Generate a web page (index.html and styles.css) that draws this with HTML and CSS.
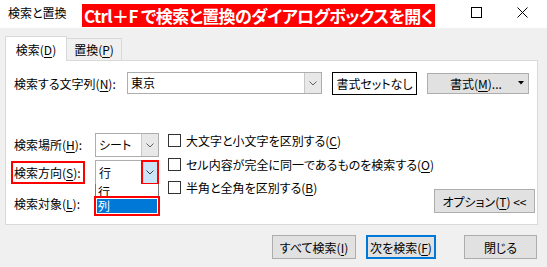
FILE: index.html
```html
<!DOCTYPE html>
<html lang="ja">
<head>
<meta charset="utf-8">
<title>検索と置換</title>
<link rel="stylesheet" href="styles.css">
</head>
<body>
<div class="window">
  <header class="titlebar">
    <span class="title">検索と置換</span>
    <span class="banner">Ctrl＋F で検索と置換のダイアログボックスを開く</span>
    <span class="controls">
      <svg width="11" height="11" viewBox="0 0 11 11"><rect x="0.5" y="0.5" width="10" height="10" fill="none" stroke="#000"/></svg>
      <svg width="11" height="11" viewBox="0 0 11 11"><path d="M0.5 0.5 L10.5 10.5 M10.5 0.5 L0.5 10.5" stroke="#000" fill="none"/></svg>
    </span>
  </header>
  <main class="body">
    <div class="tabs">
      <div class="tab active">検索(<u>D</u>)</div>
      <div class="tab">置換(<u>P</u>)</div>
    </div>
    <section class="panel">
      <div class="row1">
        <span class="lbl-find">検索する文字列(<u>N</u>):</span>
        <div class="combo combo-find">
          <span class="val">東京</span>
          <span class="drop"><svg width="8" height="5" viewBox="0 0 8 5"><path d="M0.5 0.5 L4 4 L7.5 0.5" fill="none" stroke="#606060"/></svg></span>
        </div>
        <button class="btn-noformat">書式セットなし</button>
        <button class="btn btn-format"><span>書式(<u>M</u>)...</span><svg class="caret" width="6" height="4" viewBox="0 0 6 4"><path d="M0 0 H6 L3 3.5 Z" fill="#000"/></svg></button>
      </div>
      <div class="lower">
        <div class="fields">
          <span class="lbl">検索場所(<u>H</u>):</span>
          <div class="combo">
            <span class="val">シート</span>
            <span class="drop"><svg width="8" height="5" viewBox="0 0 8 5"><path d="M0.5 0.5 L4 4 L7.5 0.5" fill="none" stroke="#606060"/></svg></span>
          </div>
          <span class="lbl marked">検索方向(<u>S</u>):</span>
          <div class="combo open">
            <span class="val">行</span>
            <span class="drop hot"><svg width="8" height="5" viewBox="0 0 8 5"><path d="M0.5 0.5 L4 4 L7.5 0.5" fill="none" stroke="#404040"/></svg></span>
            <ul class="list">
              <li class="item">行</li>
              <li class="item sel">列</li>
            </ul>
          </div>
          <span class="lbl lbl-last">検索対象(<u>L</u>):</span>
          <span></span>
        </div>
        <div class="checks">
          <label class="check"><span class="box"></span><span class="txt">大文字と小文字を区別する(<u>C</u>)</span></label>
          <label class="check"><span class="box"></span><span class="txt">セル内容が完全に同一であるものを検索する(<u>O</u>)</span></label>
          <label class="check"><span class="box"></span><span class="txt">半角と全角を区別する(<u>B</u>)</span></label>
        </div>
        <button class="btn btn-options">オプション(<u>T</u>) &lt;&lt;</button>
      </div>
    </section>
    <div class="actions">
      <button class="btn btn-all">すべて検索(<u>I</u>)</button>
      <button class="btn btn-next">次を検索(<u>F</u>)</button>
      <button class="btn btn-close">閉じる</button>
    </div>
  </main>
</div>
</body>
</html>
```

FILE: styles.css
```css
* { box-sizing: border-box; }
html, body { margin: 0; padding: 0; }
body {
  width: 548px;
  height: 267px;
  overflow: hidden;
  background: #f0f0f0;
  font-family: "Noto Sans CJK JP", "Noto Sans", sans-serif;
  font-size: 12px;
  color: #000;
  font-feature-settings: "palt";
}
u { text-decoration: underline; text-underline-offset: 2px; text-decoration-thickness: 1px; }
button { font: inherit; color: inherit; font-feature-settings: "palt"; white-space: nowrap; }

.window { width: 548px; height: 267px; border-right: 1px solid #d0d0d0; }

.titlebar {
  height: 28px;
  background: #fff;
  display: flex;
  align-items: flex-start;
}
.title {
  flex: none;
  width: 82px;
  padding-left: 8px;
  line-height: 26px;
  font-size: 12px;
  white-space: nowrap;
}
.banner {
  flex: none;
  margin-top: 4px;
  height: 23px;
  line-height: 23px;
  padding: 0 2px;
  background: #ff0000;
  color: #fff;
  font-weight: 700;
  font-size: 17px;
  letter-spacing: -0.6px;
  white-space: nowrap;
}
.controls {
  margin-left: auto;
  margin-top: 7px;
  display: flex;
  gap: 35px;
  padding-right: 19px;
}

.tabs {
  display: flex;
  align-items: flex-end;
  height: 32px;
  padding-left: 5px;
}
.tab {
  height: 22px;
  width: 55px;
  border: 1px solid #d9d9d9;
  border-bottom: none;
  border-left: none;
  background: #f0f0f0;
  display: flex;
  align-items: center;
  justify-content: center;
  white-space: nowrap;
}
.tab.active {
  width: 62px;
  height: 25px;
  margin-bottom: -1px;
  background: #fff;
  border-left: 1px solid #d9d9d9;
  position: relative;
  z-index: 1;
}

.panel {
  margin-left: 5px;
  width: 533px;
  height: 165px;
  background: #fff;
  border: 1px solid #d9d9d9;
  padding: 11px 8px 0 8px;
}

.row1 { display: flex; align-items: center; height: 22px; white-space: nowrap; }
.lbl-find { width: 113px; flex: none; }

.combo {
  display: flex;
  height: 24px;
  border: 1px solid #adadad;
  background: #fff;
}
.combo .val { flex: 1; padding-left: 3px; line-height: 22px; white-space: nowrap; }
.combo .drop {
  flex: none;
  width: 17px;
  background: #e8e8e8;
  border-left: 1px solid #c8c8c8;
  display: flex;
  align-items: center;
  justify-content: center;
}
.combo-find { width: 195px; height: 22px; flex: none; }
.combo-find .val { line-height: 20px; }

.btn-noformat {
  flex: none;
  margin-left: 10px;
  width: 85px;
  height: 23px;
  padding: 0;
  border: 1px solid #000;
  background: #fff;
}
.btn {
  background: #e1e1e1;
  border: 1px solid #adadad;
  padding: 0;
}
.btn-format {
  flex: none;
  margin-left: 10px;
  width: 102px;
  height: 21px;
  display: flex;
  align-items: center;
  padding: 0 4px 0 22px;
}
.btn-format .caret { margin-left: auto; }

.lower { display: flex; align-items: flex-start; margin-top: 36px; }
.fields {
  flex: none;
  display: grid;
  grid-template-columns: 81px 64px;
  grid-template-rows: 24px 25px 28px;
  row-gap: 3px;
  padding-top: 3px;
  align-items: center;
  white-space: nowrap;
}
.fields .combo { height: 24px; }
.fields .combo.open { height: 25px; position: relative; }
.fields .combo.open .val { line-height: 23px; }
.lbl { line-height: 16px; }
.marked {
  justify-self: start;
  margin-left: -3px;
  border: 2px solid #f00;
  padding: 2px 2px 1px 1px;
  line-height: 16px;
}
.lbl-last { align-self: start; margin-top: 8px; }

.combo .drop.hot {
  background: #cce4f7;
  border: 2px solid #f00;
  margin: -1px -1px -1px 0;
  width: 18px;
}

.list {
  position: absolute;
  top: 100%;
  left: -1px;
  right: -1px;
  margin: 0;
  padding: 0 1px 1px;
  list-style: none;
  background: #fff;
  border: 1px solid #7a7a7a;
  border-top: none;
  z-index: 2;
}
.item { height: 15px; line-height: 15px; padding-left: 1px; }
.item.sel {
  height: 14px;
  line-height: 14px;
  background: #0078d7;
  color: #fff;
  outline: 2px solid #f00;
  outline-offset: 1px;
}

.checks {
  flex: none;
  margin-left: 9px;
  display: flex;
  flex-direction: column;
  gap: 2.5px;
}
.check { height: 21px; display: flex; align-items: center; gap: 5px; white-space: nowrap; }
.box { flex: none; width: 13px; height: 13px; border: 1px solid #333; background: #fff; }

.btn-options {
  flex: none;
  margin-left: auto;
  margin-top: 59px;
  width: 101px;
  height: 24px;
}

.actions {
  display: flex;
  justify-content: flex-end;
  gap: 10px;
  margin-top: 10px;
  padding-right: 10px;
}
.actions .btn { height: 24px; }
.btn-all { width: 84px; }
.btn-next { width: 70px; border: 2px solid #0078d7; }
.btn-close { width: 73px; margin-left: 18px; }
```
